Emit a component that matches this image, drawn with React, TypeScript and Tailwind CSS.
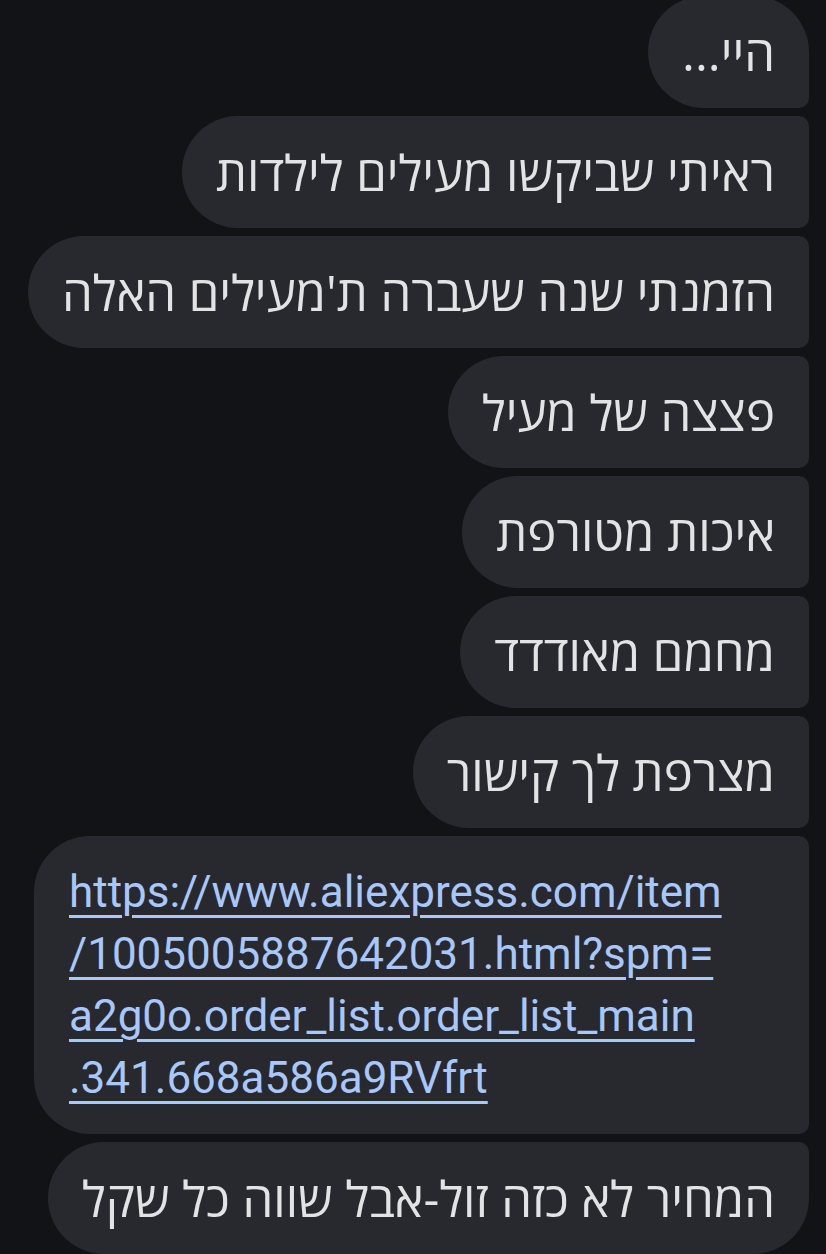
const messages = [
  "היי...",
  "ראיתי שביקשו מעילים לילדות",
  "הזמנתי שנה שעברה ת'מעילים האלה",
  "פצצה של מעיל",
  "איכות מטורפת",
  "מחמם מאודדד",
  "מצרפת לך קישור",
];

const linkLines = [
  "https://www.aliexpress.com/item",
  "/1005005887642031.html?spm=",
  "a2g0o.order_list.order_list_main",
  ".341.668a586a9RVfrt",
];

const App = () => {
  return (
    <div className="min-h-screen bg-[#121316] overflow-hidden">
      <div className="flex flex-col items-end gap-2 pr-[17px] -mt-1">
        {messages.map((text, i) => (
          <div
            key={i}
            dir="rtl"
            className={`h-[112px] flex items-center bg-[#28292e] px-[34px] text-[49px] leading-[62px] text-[#e3e3e6] ${
              i === 0
                ? "rounded-l-[56px] rounded-tr-[56px] rounded-br-[10px]"
                : "rounded-l-[56px] rounded-r-[10px]"
            }`}
            style={{ fontFamily: '"Open Sans", "DejaVu Sans", sans-serif' }}
          >
            {text}
          </div>
        ))}

        {/* link bubble */}
        <div className="w-[775px] bg-[#28292e] rounded-l-[56px] rounded-r-[10px] px-[35px] py-[25px]">
          <a
            href="#"
            className="block text-[#a8c7fa] text-[44px] leading-[62px]"
            style={{ fontFamily: 'Roboto, "Liberation Sans", sans-serif' }}
          >
            {linkLines.map((line, i) => (
              <span key={i} className="block">
                <span className="underline decoration-[3px] underline-offset-[8px]">{line}</span>
              </span>
            ))}
          </a>
        </div>

        <div
          dir="rtl"
          className="h-[112px] flex items-center bg-[#28292e] px-[34px] text-[49px] leading-[62px] text-[#e3e3e6] rounded-l-[56px] rounded-tr-[10px] rounded-br-[56px]"
          style={{ fontFamily: '"Open Sans", "DejaVu Sans", sans-serif' }}
        >
          המחיר לא כזה זול-אבל שווה כל שקל
        </div>
      </div>
    </div>
  );
};

export default App;
